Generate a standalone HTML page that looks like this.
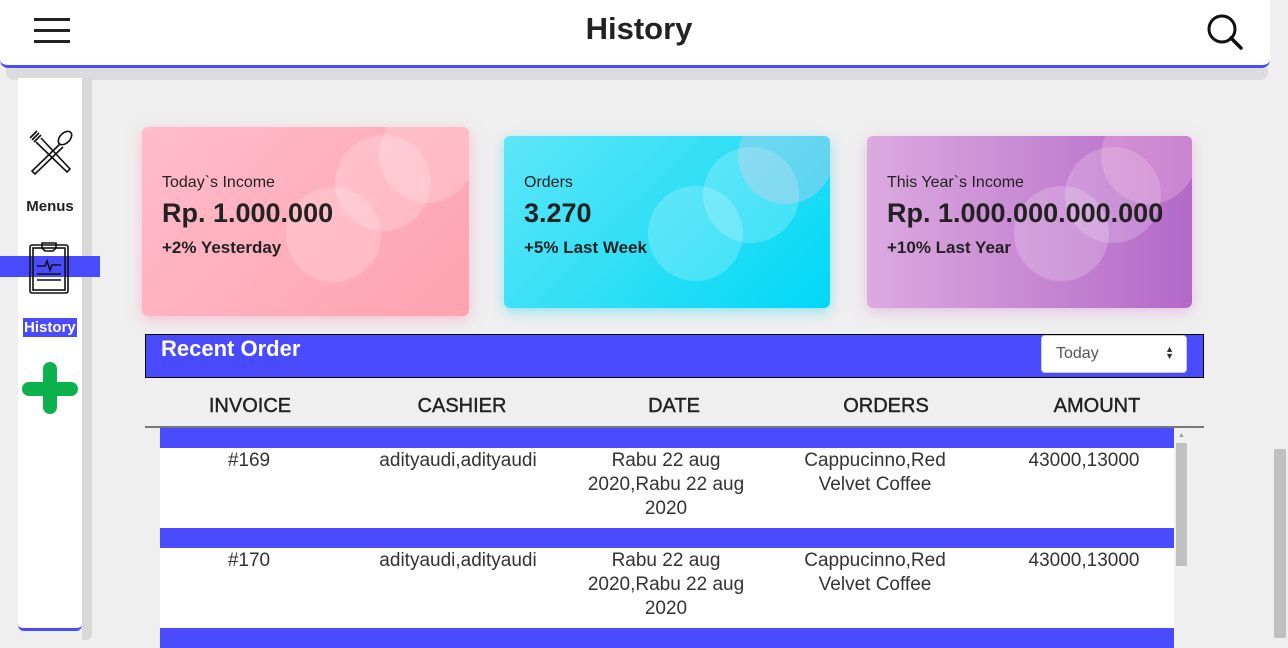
<!DOCTYPE html>
<html><head><style>
*{margin:0;padding:0;box-sizing:border-box}
body{width:1288px;height:647px;overflow:hidden;background:#efefef;font-family:"Liberation Sans",sans-serif;position:relative;color:#222}
.abs{position:absolute}
.hdr{left:0;top:0;width:1270px;height:68px;background:#fff;border-bottom:3px solid #4a4aff;border-radius:0 0 8px 8px}
.shadow{left:6px;top:68px;width:1262px;height:12px;background:#dcdcdc;border-radius:0 0 8px 8px}
.side{left:18px;top:78px;width:64px;height:553px;background:#fff;border-bottom:3px solid #4a4aff;border-radius:0 0 6px 6px}
.sideSh{left:82px;top:78px;width:10px;height:562px;background:#d8d8d8;border-radius:0 0 6px 0}
.card{border-radius:6px;overflow:hidden;color:#222}
.card .t{position:absolute;left:20px;top:38px;font-size:16px}
.card .v{position:absolute;left:20px;top:62px;font-size:27px;font-weight:bold}
.card .s{position:absolute;left:20px;top:102px;font-size:17px;font-weight:bold}
.circ{position:absolute;border-radius:50%;background:rgba(255,255,255,.2)}
.hcell{position:absolute;top:395px;font-size:20px;transform:translateX(-50%);color:#222;-webkit-text-stroke:0.4px #222}
.cell{position:absolute;font-size:19px;text-align:center;transform:translateX(-50%);line-height:24px;color:#333}
.band{position:absolute;left:160px;width:1014px;height:20px;background:#4a4aff}
</style></head><body>
<div class="abs shadow"></div>
<div class="abs hdr"></div>
<div class="abs" style="left:34px;top:18px;width:36px;height:3px;background:#222;box-shadow:0 11px 0 #222,0 22px 0 #222"></div>
<div class="abs" style="left:0;top:11px;width:1278px;text-align:center;font-size:31px;font-weight:bold;color:#222">History</div>
<svg class="abs" style="left:1205px;top:12px" width="40" height="40"><circle cx="17" cy="17" r="13" fill="none" stroke="#111" stroke-width="3"/><line x1="26" y1="26" x2="36" y2="36" stroke="#111" stroke-width="3.5" stroke-linecap="round"/></svg>

<div class="abs sideSh"></div>
<div class="abs side"></div>
<svg class="abs" style="left:27px;top:128px" width="48" height="48" fill="none" stroke="#111" stroke-width="1.6"><path d="M3 10 L10 3 M5 12 L12 5 M7 14 L14 7 M9 14 L40 44 L43 41 L14 10"/><ellipse cx="38" cy="10" rx="5" ry="8" transform="rotate(45 38 10)"/><path d="M33 16 L5 43 L8 46 L36 19"/></svg>
<div class="abs" style="left:18px;top:198px;width:64px;text-align:center;font-size:15px;font-weight:bold">Menus</div>
<div class="abs" style="left:0;top:256px;width:100px;height:21px;background:#4a4aff"></div>
<svg class="abs" style="left:28px;top:241px" width="44" height="54" fill="none" stroke="#111" stroke-width="1.6"><rect x="2" y="4" width="38" height="48" rx="2"/><rect x="5" y="7" width="32" height="42"/><path d="M14 2 h14 v5 l-3 3 h-8 l-3 -3z"/><path d="M9 25 h8 l2 -5 l3 9 l2 -5 h9 M9 33 h24 M9 39 h24"/></svg>
<div class="abs" style="left:23px;top:318px;padding:1px 1px;background:#4a4aff;color:#fff;font-size:15px;font-weight:bold">History</div>
<div class="abs" style="left:22px;top:382px;width:56px;height:14px;background:#0bb14b;border-radius:7px"></div>
<div class="abs" style="left:43px;top:362px;width:14px;height:52px;background:#0bb14b;border-radius:7px"></div>

<div class="abs card" style="left:142px;top:127px;width:327px;height:189px;background:linear-gradient(135deg,#ffbccd,#ffa2ae);box-shadow:0 4px 14px rgba(255,150,180,.5)">
<div class="circ" style="left:144px;top:60px;width:95px;height:95px"></div><div class="circ" style="left:193px;top:8px;width:96px;height:96px"></div><div class="circ" style="left:237px;top:-20px;width:96px;height:96px"></div>
<div class="t" style="top:47px">Today`s Income</div><div class="v" style="top:71px">Rp. 1.000.000</div><div class="s" style="top:111px">+2% Yesterday</div></div>
<div class="abs card" style="left:504px;top:136px;width:326px;height:172px;background:linear-gradient(135deg,#5ee6f7,#00d8f6);box-shadow:0 4px 14px rgba(0,210,240,.4)">
<div class="circ" style="left:144px;top:50px;width:95px;height:95px"></div><div class="circ" style="left:199px;top:11px;width:96px;height:96px"></div><div class="circ" style="left:234px;top:-28px;width:96px;height:96px;background:rgba(255,200,230,.3)"></div>
<div class="t">Orders</div><div class="v">3.270</div><div class="s">+5% Last Week</div></div>
<div class="abs card" style="left:867px;top:136px;width:325px;height:172px;background:linear-gradient(90deg,#dcaadf,#b468c8);box-shadow:0 4px 14px rgba(220,150,220,.5)">
<div class="circ" style="left:147px;top:50px;width:95px;height:95px"></div><div class="circ" style="left:198px;top:11px;width:96px;height:96px"></div><div class="circ" style="left:234px;top:-28px;width:96px;height:96px;background:rgba(255,200,230,.3)"></div>
<div class="t">This Year`s Income</div><div class="v">Rp. 1.000.000.000.000</div><div class="s">+10% Last Year</div></div>

<div class="abs" style="left:145px;top:334px;width:1059px;height:44px;background:#4a4aff;border:1px solid #000"></div>
<div class="abs" style="left:161px;top:336px;color:#fff;font-size:22px;font-weight:bold">Recent Order</div>
<div class="abs" style="left:1041px;top:335px;width:146px;height:38px;background:#fff;border-radius:4px;border:1px solid #ccc"><span style="position:absolute;left:14px;top:9px;font-size:16px;color:#555">Today</span><span style="position:absolute;right:12px;top:10px;font-size:9px;line-height:7px;color:#333">▲<br>▼</span></div>

<div class="hcell" style="left:250px">INVOICE</div><div class="hcell" style="left:462px">CASHIER</div><div class="hcell" style="left:674px">DATE</div><div class="hcell" style="left:886px">ORDERS</div><div class="hcell" style="left:1097px">AMOUNT</div>
<div class="abs" style="left:145px;top:426px;width:1059px;height:2px;background:#777"></div>

<div class="abs" style="left:160px;top:428px;width:1014px;height:219px;background:#fff"></div>
<div class="band" style="top:428px"></div><div class="band" style="top:528px"></div><div class="band" style="top:628px"></div>
<div class="cell" style="left:249px;top:449px">#169</div><div class="cell" style="left:458px;top:449px">adityaudi,adityaudi</div><div class="cell" style="left:666px;top:449px;width:180px">Rabu 22 aug 2020,Rabu 22 aug 2020</div><div class="cell" style="left:875px;top:449px;width:170px">Cappucinno,Red Velvet Coffee</div><div class="cell" style="left:1084px;top:449px">43000,13000</div>
<div class="cell" style="left:249px;top:549px">#170</div><div class="cell" style="left:458px;top:549px">adityaudi,adityaudi</div><div class="cell" style="left:666px;top:549px;width:180px">Rabu 22 aug 2020,Rabu 22 aug 2020</div><div class="cell" style="left:875px;top:549px;width:170px">Cappucinno,Red Velvet Coffee</div><div class="cell" style="left:1084px;top:549px">43000,13000</div>
<div class="abs" style="left:1174px;top:428px;width:14px;height:219px;background:#f0f0f0"></div>
<div class="abs" style="left:1178px;top:432px;font-size:7px;color:#999">▲</div>
<div class="abs" style="left:1176px;top:443px;width:11px;height:123px;background:#c0c0c0"></div>
<div class="abs" style="left:1274px;top:449px;width:12px;height:189px;background:#c0c0c0"></div>
</body></html>
